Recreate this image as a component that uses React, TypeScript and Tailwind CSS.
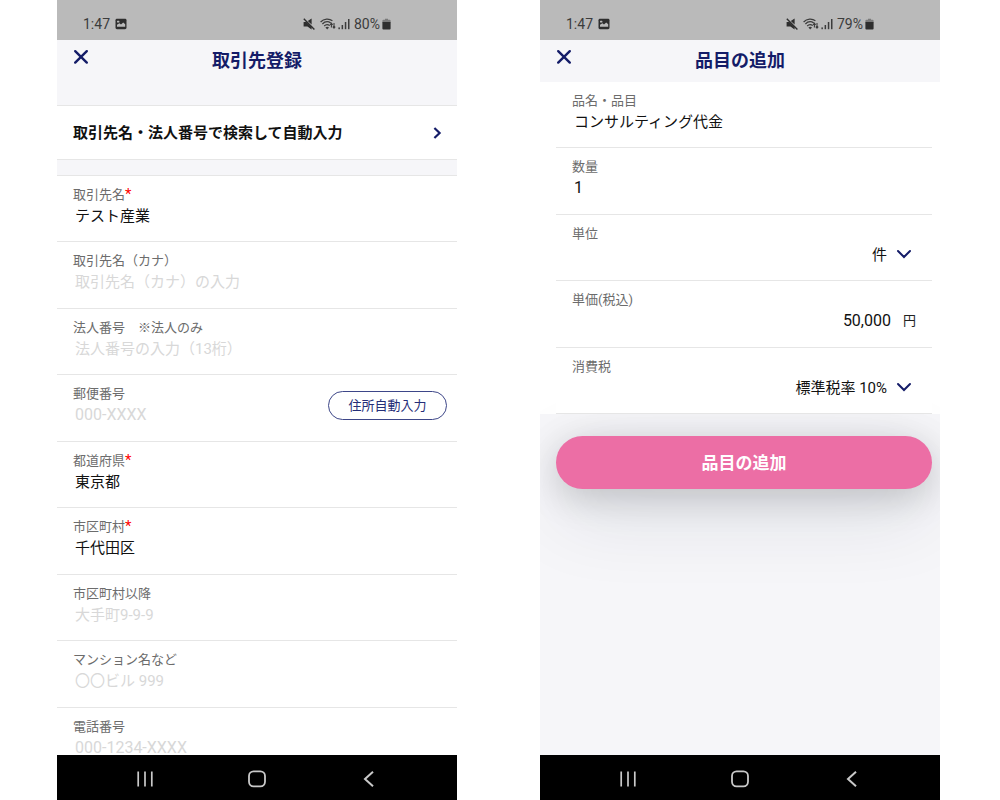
import React, { useState } from 'react';
import { clsx } from 'clsx';

type FieldProps = {
  id: string;
  label: string;
  value?: string;
  placeholder?: string;
  required?: boolean;
  numeric?: boolean;
  action?: string;
};

const customerFields: FieldProps[] = [
  { id: 'name', label: '取引先名', value: 'テスト産業', required: true },
  { id: 'kana', label: '取引先名（カナ）', placeholder: '取引先名（カナ）の入力' },
  { id: 'corporate', label: '法人番号　※法人のみ', placeholder: '法人番号の入力（13桁）' },
  { id: 'postal', label: '郵便番号', placeholder: '000-XXXX', numeric: true, action: '住所自動入力' },
  { id: 'prefecture', label: '都道府県', value: '東京都', required: true },
  { id: 'city', label: '市区町村', value: '千代田区', required: true },
  { id: 'street', label: '市区町村以降', placeholder: '大手町9-9-9' },
  { id: 'building', label: 'マンション名など', placeholder: '〇〇ビル 999' },
  { id: 'phone', label: '電話番号', placeholder: '000-1234-XXXX', numeric: true },
];

const rowClass = 'min-h-[66px] even:min-h-[67px] border-b border-[#e6e6e6] bg-white px-4 pt-[9px]';
const labelClass = 'block text-[13px] leading-5 text-[#6c6c6c]';

const StatusBar: React.FC<{ battery: string }> = ({ battery }) => (
  <div className="flex h-10 shrink-0 items-center justify-between bg-[#bababa] pt-2 pr-[66px] pl-[26px] text-sm text-[#3c3c3c]">
    <div className="flex items-center gap-[5px]">
      <span>1:47</span>
      <svg viewBox="0 0 12 12" className="h-3 w-3" aria-hidden="true">
        <rect x="0.5" y="0.8" width="11" height="10.4" rx="1.4" fill="#2e2e2e" />
        <rect x="2" y="2.8" width="2.4" height="1.8" rx="0.5" fill="#bababa" />
        <path d="M2 8.8V6.8L4.4 5.2L6 6.6L8.2 4.4L10.2 6.2V8.8Z" fill="#bababa" />
      </svg>
    </div>
    <div className="flex items-center">
      <svg viewBox="0 0 12 12" className="mr-[5px] h-3 w-3" fill="#2e2e2e" aria-hidden="true">
        <path d="M0.6 4H3.4L8.6 9V11.6L4.4 8.6H0.6Z" />
        <path d="M4.8 3L8.6 0.6V6.6Z" />
        <path d="M0.8 0.8L11.4 11.4" stroke="#2e2e2e" strokeWidth="1.4" />
      </svg>
      <svg viewBox="0 0 16 12" className="mr-[2px] h-3 w-4" fill="none" stroke="#3c3c3c" strokeWidth="1.2" aria-hidden="true">
        <path d="M0.6 4C4 0.4 9.2 0.4 12.4 2.8" />
        <path d="M2.4 6C5 3.4 8.4 3.4 10.8 5" />
        <path d="M4.2 8C5.8 6.4 8 6.4 9.8 7.6" />
        <path d="M5.4 9.4L7.2 11.4L9 9.4C7.8 8.6 6.6 8.6 5.4 9.4Z" fill="#3c3c3c" stroke="none" />
        <path d="M11.4 9.4V5.4M10.2 6.8L11.4 5.2L12.6 6.8M14 5V9.8M12.8 8.6L14 10.2L15.2 8.6" strokeWidth="1.1" />
      </svg>
      <svg viewBox="0 0 12 12" className="mr-1 h-3 w-3" fill="#3c3c3c" aria-hidden="true">
        <rect x="0.4" y="9.4" width="1.5" height="1.8" />
        <rect x="3.6" y="7" width="1.5" height="4.2" />
        <rect x="6.8" y="4" width="1.5" height="7.2" />
        <rect x="10" y="1" width="1.5" height="10.2" />
      </svg>
      <span>{battery}</span>
      <svg viewBox="0 0 9 12" className="ml-[2px] h-3 w-[9px]" aria-hidden="true">
        <path d="M3 0.8H6V1.8H7.6Q8.6 1.8 8.6 2.8V4.4H0.4V2.8Q0.4 1.8 1.4 1.8H3Z" fill="#7a7a7a" />
        <path d="M0.4 4H8.6V10.4Q8.6 11.4 7.6 11.4H1.4Q0.4 11.4 0.4 10.4Z" fill="#2e2e2e" />
      </svg>
    </div>
  </div>
);

const NavBar: React.FC = () => (
  <nav className="grid h-[45px] shrink-0 grid-cols-3 place-items-center bg-black px-8 pt-[2px] text-[#c9c9c9]">
    <button aria-label="履歴">
      <svg viewBox="0 0 18 18" className="h-[18px] w-[18px]" fill="none" stroke="currentColor" strokeWidth="1.7">
        <path d="M2.2 1.4V16.6M9 1.4V16.6M15.8 1.4V16.6" />
      </svg>
    </button>
    <button aria-label="ホーム">
      <svg viewBox="0 0 18 18" className="h-[18px] w-[18px]" fill="none" stroke="currentColor" strokeWidth="1.8">
        <rect x="1" y="1.4" width="16" height="15" rx="4.6" />
      </svg>
    </button>
    <button aria-label="戻る">
      <svg viewBox="0 0 18 18" className="h-[18px] w-[18px]" fill="none" stroke="currentColor" strokeWidth="2">
        <path d="M13 1.8L5 9L13 16.2" />
      </svg>
    </button>
  </nav>
);

const Header: React.FC<{ title: string; className: string }> = ({ title, className }) => (
  <header className={clsx('flex shrink-0 items-start bg-[#f6f6f9] px-[14px] pt-[7px] text-[#141c68]', className)}>
    <button aria-label="閉じる" className="h-5 w-5">
      <svg viewBox="0 0 20 20" className="h-5 w-5" fill="none" stroke="currentColor" strokeWidth="2.4" strokeLinecap="round">
        <path d="M4.2 4.2L15.8 15.6M15.8 4.2L4.2 15.6" />
      </svg>
    </button>
    <h1 className="flex-1 pr-5 text-center text-lg leading-7 font-bold">{title}</h1>
  </header>
);

const Field: React.FC<FieldProps> = ({ id, label, value, placeholder, required, numeric, action }) => {
  const [text, setText] = useState(value ?? '');

  return (
    <div className={clsx(rowClass, 'flex')}>
      <div className="min-w-0 flex-1">
        <label htmlFor={id} className={labelClass}>
          {label}
          {required && <span className="text-[15px] leading-none text-[#ff0000]">*</span>}
        </label>
        <input
          id={id}
          value={text}
          placeholder={placeholder}
          onChange={(e) => setText(e.target.value)}
          className={clsx(
            'block h-[22px] w-full bg-transparent pl-[2px] text-[#111] outline-none placeholder:text-[#d8d8d8]',
            numeric ? 'text-base' : 'text-[15px]',
          )}
        />
      </div>
      {action && (
        <button className="-mr-[6px] mt-[7px] h-[29px] w-[119px] rounded-full border border-[#3d4688] text-[13px] text-[#252e78]">
          {action}
        </button>
      )}
    </div>
  );
};

const SelectField: React.FC<{ id: string; label: string; options: string[] }> = ({ id, label, options }) => (
  <div className={rowClass}>
    <label htmlFor={id} className={labelClass}>{label}</label>
    <div className="relative">
      <select
        id={id}
        className="block h-[22px] w-full appearance-none bg-transparent pr-[29px] text-[15px] text-[#111] outline-none [text-align-last:right]"
      >
        {options.map((option) => (
          <option key={option}>{option}</option>
        ))}
      </select>
      <svg
        viewBox="0 0 16 16"
        className="pointer-events-none absolute top-[2px] right-1 h-4 w-4"
        fill="none"
        stroke="#141c68"
        strokeWidth="2"
        strokeLinecap="round"
        aria-hidden="true"
      >
        <path d="M2 5L8 11L14 5" />
      </svg>
    </div>
  </div>
);

const CustomerScreen: React.FC = () => (
  <section className="flex min-w-0 flex-1 flex-col overflow-hidden bg-[#f6f6f9]">
    <StatusBar battery="80%" />
    <Header title="取引先登録" className="h-[66px] border-b border-[#e6e6e6]" />
    <main className="min-h-0 flex-1 overflow-hidden">
      <button className="flex h-[54px] w-full items-center justify-between border-b border-[#e6e6e6] bg-white pr-3 pl-4 text-left text-[15px] font-bold text-[#111]">
        <span className="pt-[2px]">取引先名・法人番号で検索して自動入力</span>
        <svg viewBox="0 0 16 16" className="h-4 w-4" fill="none" stroke="#141c68" strokeWidth="2.2" aria-hidden="true">
          <path d="M5.4 3L10.6 8L5.4 13" />
        </svg>
      </button>
      <form className="mt-[15px] border-t border-[#e6e6e6]">
        <div>
          {customerFields.map((field) => (
            <Field key={field.id} {...field} />
          ))}
        </div>
      </form>
    </main>
    <NavBar />
  </section>
);

const ItemScreen: React.FC = () => {
  const [price, setPrice] = useState('50,000');

  return (
    <section className="flex min-w-0 flex-1 flex-col overflow-hidden bg-[#f6f6f9]">
      <StatusBar battery="79%" />
      <Header title="品目の追加" className="h-[42px]" />
      <main className="min-h-0 flex-1 overflow-hidden">
        <div className="bg-white pr-2 pl-4">
          <div className="relative z-10">
            <Field id="item" label="品名・品目" value="コンサルティング代金" />
            <Field id="quantity" label="数量" value="1" numeric />
            <SelectField id="unit" label="単位" options={['件', '個', '時間']} />
            <div className={rowClass}>
              <label htmlFor="price" className={labelClass}>単価(税込)</label>
              <div className="flex items-center gap-3">
                <input
                  id="price"
                  value={price}
                  onChange={(e) => setPrice(e.target.value)}
                  className="h-[22px] min-w-0 flex-1 bg-transparent text-right text-base text-[#111] outline-none"
                />
                <span className="text-[13px] leading-[22px] text-[#222]">円</span>
              </div>
            </div>
            <SelectField id="tax" label="消費税" options={['標準税率 10%', '軽減税率 8%']} />
          </div>
        </div>
        <div className="pt-[22px] pr-2 pl-4">
          <button className="h-[53px] w-full rounded-full bg-[#ec6ea5] pt-[2px] text-[17px] font-bold text-white shadow-[0_24px_80px_rgba(20,30,60,0.12),0_8px_36px_rgba(0,0,0,0.18)]">
            品目の追加
          </button>
        </div>
      </main>
      <NavBar />
    </section>
  );
};

export default function App() {
  return (
    <div
      lang="ja"
      className="flex h-screen gap-[83px] bg-white pr-[60px] pl-[57px] font-['Roboto','Noto_Sans_CJK_JP',sans-serif]"
    >
      <CustomerScreen />
      <ItemScreen />
    </div>
  );
}
